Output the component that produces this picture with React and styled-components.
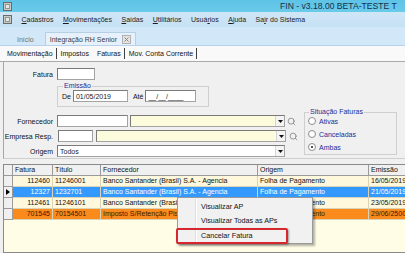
import styled, { createGlobalStyle } from "styled-components";
import { Search } from "lucide-react";

const GlobalStyle = createGlobalStyle`
  html, body {
    margin: 0;
    padding: 0;
    background: #f0f0f0;
    overflow: hidden;
  }
  body {
    font-family: "Liberation Sans", Arial, sans-serif;
  }
`;

const Window = styled.div`
  position: relative;
  width: 405px;
  height: 253px;
  overflow: hidden;
  background: #f0f0f0;
  display: flex;
  flex-direction: column;
  font-size: 7px;
  color: #000;
`;

const TitleBar = styled.div`
  height: 12px;
  flex: none;
  display: flex;
  align-items: center;
  padding-left: 3px;
  background: linear-gradient(#5ec3e6, #6acaea);
  white-space: nowrap;
`;

const Title = styled.span`
  margin-left: 268px;
  font-size: 8.6px;
  color: #14304a;
`;

const MenuBar = styled.div`
  height: 15px;
  flex: none;
  display: flex;
  align-items: center;
  padding-left: 3px;
  gap: 9.5px;
  background: linear-gradient(#cfe6f6, #c6e1f4);
  white-space: nowrap;
`;

const MenuItem = styled.span`
  color: #1b1b1b;
  u {
    text-decoration: underline;
  }
`;

const MdiTabs = styled.div`
  height: 18px;
  flex: none;
  display: flex;
  align-items: flex-end;
  padding-left: 12px;
  gap: 6px;
  background: #d2e8f8;
  border-bottom: 1px solid #b7d2ea;
`;

const MdiTab = styled.div`
  height: 12px;
  display: flex;
  align-items: center;
  gap: 3px;
  padding: 0 4px;
  color: ${(p) => (p.$active ? "#3d3d3d" : "#707070")};
  background: ${(p) => (p.$active ? "#e6f1fb" : "transparent")};
  border: 1px solid ${(p) => (p.$active ? "#b5cfe6" : "transparent")};
  border-bottom: none;
`;

const CloseBox = styled.span`
  width: 7px;
  height: 7px;
  border: 1px solid #b0b0b0;
  background: #e4e4e4;
  display: flex;
  align-items: center;
  justify-content: center;
  margin-left: 2px;
`;

const PageTabs = styled.div`
  height: 15px;
  flex: none;
  display: flex;
  align-items: center;
  padding-left: 3px;
  background: #f9f9f9;
  border-bottom: 1px solid #a9a9a9;
`;

const PageTab = styled.div`
  height: 11px;
  display: flex;
  align-items: center;
  padding: 0 3px 0 4px;
  border-right: 1px solid ${(p) => (p.$sep ? "#404040" : "transparent")};
  color: #111;
`;

const FormPanel = styled.div`
  flex: none;
  height: 97px;
  margin-left: 3px;
  padding-top: 6px;
  box-sizing: border-box;
  border-left: 1px solid #a6a6a6;
  border-bottom: 1px solid #cfcfcf;
  display: flex;
  flex-direction: column;
`;

const FieldRow = styled.div`
  display: flex;
  align-items: center;
  height: 12px;
  gap: ${(p) => p.$gap ?? 2}px;
`;

const Label = styled.span`
  width: 49px;
  margin-right: 2px;
  text-align: right;
  white-space: nowrap;
  color: #111;
`;

const Input = styled.div`
  width: ${(p) => p.$w}px;
  height: 12px;
  box-sizing: border-box;
  border: 1px solid #a3a3a3;
  border-top-color: #7a7a7a;
  border-left-color: #7a7a7a;
  background: ${(p) => (p.$yellow ? "#fcfbdc" : "#fff")};
  display: flex;
  align-items: center;
  padding-left: 2px;
  white-space: nowrap;
  color: #222;
`;

const DropButton = styled.span`
  margin-left: auto;
  width: 8px;
  height: 10px;
  display: flex;
  align-items: center;
  justify-content: center;
  background: #f4f4f4;
  border-left: 1px solid #d4d4d4;
`;

const GroupBox = styled.fieldset`
  margin: ${(p) => p.$margin || 0};
  width: ${(p) => p.$w}px;
  height: ${(p) => p.$h}px;
  box-sizing: border-box;
  padding: 0 0 0 ${(p) => p.$pad ?? 4}px;
  border: 1px solid #cfcfcf;
  display: flex;
  flex-direction: ${(p) => p.$dir || "row"};
  align-items: ${(p) => (p.$dir === "column" ? "stretch" : "center")};
  gap: ${(p) => p.$gap ?? 0}px;
`;

const Legend = styled.legend`
  padding: 0 1px;
  margin-left: 1px;
  font-size: 7px;
  color: #1d2c96;
  line-height: 8px;
`;

const Small = styled.span`
  color: #111;
  white-space: nowrap;
  margin-left: ${(p) => p.$ml ?? 0}px;
`;

const Lower = styled.div`
  display: flex;
  align-items: flex-start;
  gap: 5px;
  margin-top: 5px;
`;

const FieldColumn = styled.div`
  display: flex;
  flex-direction: column;
  gap: 3px;
  padding-top: 3px;
`;

const Magnifier = styled.span`
  display: flex;
  width: 10px;
  color: #7b7b7b;
`;

const RadioRow = styled.label`
  display: flex;
  align-items: center;
  gap: 3px;
  height: 10px;
  color: #1d2c96;
`;

const RadioDot = styled.span`
  width: 6px;
  height: 6px;
  border-radius: 50%;
  border: 1px solid #8d8d8d;
  background: #fff;
  display: flex;
  align-items: center;
  justify-content: center;
  &::after {
    content: "";
    width: 2px;
    height: 2px;
    border-radius: 50%;
    background: ${(p) => (p.$on ? "#1a1a1a" : "transparent")};
  }
`;

const Grid = styled.div`
  flex: 1;
  margin: 5px 0 0 3px;
  border: 1px solid #8a8a8a;
  border-right: none;
  background: #fffde6;
  overflow: hidden;
`;

const GridRow = styled.div`
  display: grid;
  grid-template-columns: 9px 40px 48px 157px 111px 70px;
  height: 11px;
  background: ${(p) =>
    p.$kind === "sel" ? "#3399ff" : p.$kind === "orange" ? "#fa8a1c" : p.$kind === "head" ? "#f0f0f0" : "#fff8dc"};
  color: ${(p) => (p.$kind === "sel" ? "#fff" : p.$kind === "orange" ? "#3a1a00" : "#111")};
`;

const Cell = styled.div`
  box-sizing: border-box;
  border-right: 1px solid ${(p) => (p.$head ? "#9a9a9a" : "#d9d4b8")};
  border-bottom: 1px solid ${(p) => (p.$head ? "#9a9a9a" : "#d9d4b8")};
  padding: 0 2px;
  line-height: 10px;
  white-space: nowrap;
  overflow: hidden;
  text-align: ${(p) => (p.$right ? "right" : "left")};
`;

const Indicator = styled.div`
  box-sizing: border-box;
  background: #f0f0f0;
  border-right: 1px solid #9a9a9a;
  border-bottom: 1px solid #9a9a9a;
  display: flex;
  align-items: center;
  justify-content: center;
`;

const ContextMenu = styled.div`
  position: absolute;
  left: 177px;
  top: 197px;
  width: 136px;
  height: 47px;
  box-sizing: border-box;
  background: #f1f1f1;
  border: 1px solid #9a9a9a;
  box-shadow: 2px 2px 2px rgba(0, 0, 0, 0.3);
  padding-top: 1px;
  display: flex;
  flex-direction: column;
  &::before {
    content: "";
    position: absolute;
    left: 17px;
    top: 1px;
    bottom: 1px;
    border-left: 1px solid #e0e0e0;
    border-right: 1px solid #fff;
  }
`;

const MenuEntry = styled.div`
  position: relative;
  height: 14.5px;
  display: flex;
  align-items: center;
  padding-left: 23px;
  font-size: 7.2px;
  color: #111;
`;

const Highlight = styled.span`
  position: absolute;
  left: -2px;
  top: 0;
  width: 112px;
  height: 16px;
  box-sizing: border-box;
  border: 2px solid #d6262e;
  border-radius: 2px;
  box-shadow: 1px 1px 2px rgba(0, 0, 0, 0.35);
`;

const AppIcon = () => (
  <svg width="9" height="9" viewBox="0 0 9 9">
    <rect x="0.5" y="0.5" width="8" height="8" fill="#c9c9c9" stroke="#6b6b6b" />
    <rect x="2" y="2" width="5" height="5" fill="#8e9e8e" />
    <rect x="3" y="3" width="3" height="3" fill="#e8e8e8" />
  </svg>
);

const Arrow = () => (
  <svg width="5" height="3" viewBox="0 0 5 3">
    <path d="M0 0h5L2.5 3z" fill="#111" />
  </svg>
);

const rows = [
  { kind: "norm", fatura: "112460", titulo: "11246001", forn: "Banco Santander (Brasil) S.A. - Agencia", orig: "Folha de Pagamento", em: "16/05/2019" },
  { kind: "sel", fatura: "12327", titulo: "1232701", forn: "Banco Santander (Brasil) S.A. - Agencia", orig: "Folha de Pagamento", em: "21/05/2019" },
  { kind: "norm", fatura: "112461", titulo: "11246101", forn: "Banco Santander (Brasil] S.A. - Agencia", orig: "Folha de Pagamento", em: "23/05/2019" },
  { kind: "orange", fatura: "701545", titulo: "70154501", forn: "Imposto S/Retenção Pis/Cofins/CSLL", orig: "Folha de Pagamento", em: "29/06/2500" },
];

export default function App() {
  return (
    <Window>
      <GlobalStyle />
      <TitleBar>
        <AppIcon />
        <Title>FIN - v3.18.00 BETA-TESTE T</Title>
      </TitleBar>

      <MenuBar>
        <AppIcon />
        <MenuItem><u>C</u>adastros</MenuItem>
        <MenuItem><u>M</u>ovimentações</MenuItem>
        <MenuItem><u>S</u>aídas</MenuItem>
        <MenuItem><u>U</u>tilitários</MenuItem>
        <MenuItem>Usuá<u>r</u>ios</MenuItem>
        <MenuItem><u>A</u>juda</MenuItem>
        <MenuItem>Sa<u>i</u>r do Sistema</MenuItem>
      </MenuBar>

      <MdiTabs>
        <MdiTab>Início</MdiTab>
        <MdiTab $active>
          Integração RH Senior
          <CloseBox>
            <svg width="5" height="5" viewBox="0 0 5 5">
              <path d="M0.5 0.5l4 4M4.5 0.5l-4 4" stroke="#888" strokeWidth="1" />
            </svg>
          </CloseBox>
        </MdiTab>
      </MdiTabs>

      <PageTabs>
        <PageTab $sep>Movimentação</PageTab>
        <PageTab>Impostos</PageTab>
        <PageTab $sep>Faturas</PageTab>
        <PageTab $sep>Mov. Conta Corrente</PageTab>
      </PageTabs>

      <FormPanel>
        <FieldRow>
          <Label>Fatura</Label>
          <Input $w={38} />
        </FieldRow>

        <GroupBox $margin="2px 0 0 53px" $w={152} $h={25} $pad={4} $gap={2}>
          <Legend>Emissão</Legend>
          <Small>De</Small>
          <Input $w={55}>01/05/2019</Input>
          <Small $ml={3}>Até</Small>
          <Input $w={51}>__/__/____</Input>
        </GroupBox>

        <Lower>
          <FieldColumn>
            <FieldRow>
              <Label>Fornecedor</Label>
              <Input $w={71} />
              <Input $w={155} $yellow>
                <DropButton><Arrow /></DropButton>
              </Input>
              <Magnifier><Search size={9} strokeWidth={2} /></Magnifier>
            </FieldRow>
            <FieldRow $gap={3}>
              <Label>Empresa Resp.</Label>
              <Input $w={35} />
              <Input $w={190} $yellow>
                <DropButton><Arrow /></DropButton>
              </Input>
              <Magnifier><Search size={9} strokeWidth={2} /></Magnifier>
            </FieldRow>
            <FieldRow>
              <Label>Origem</Label>
              <Input $w={228}>
                Todos
                <DropButton><Arrow /></DropButton>
              </Input>
            </FieldRow>
          </FieldColumn>

          <GroupBox $w={93} $h={47} $pad={3} $dir="column" $gap={3} $margin="-4px 0 0 0">
            <Legend>Situação Faturas</Legend>
            <RadioRow><RadioDot />Ativas</RadioRow>
            <RadioRow><RadioDot />Canceladas</RadioRow>
            <RadioRow><RadioDot $on />Ambas</RadioRow>
          </GroupBox>
        </Lower>
      </FormPanel>

      <Grid>
        <GridRow $kind="head">
          <Indicator />
          <Cell $head>Fatura</Cell>
          <Cell $head>Título</Cell>
          <Cell $head>Fornecedor</Cell>
          <Cell $head>Origem</Cell>
          <Cell $head>Emissão</Cell>
        </GridRow>
        {rows.map((r) => (
          <GridRow key={r.fatura} $kind={r.kind}>
            <Indicator>
              {r.kind === "sel" && (
                <svg width="4" height="6" viewBox="0 0 4 6">
                  <path d="M0 0l4 3-4 3z" fill="#000" />
                </svg>
              )}
            </Indicator>
            <Cell $right>{r.fatura}</Cell>
            <Cell>{r.titulo}</Cell>
            <Cell>{r.forn}</Cell>
            <Cell>{r.orig}</Cell>
            <Cell>{r.em}</Cell>
          </GridRow>
        ))}
      </Grid>

      <ContextMenu>
        <MenuEntry>Visualizar AP</MenuEntry>
        <MenuEntry>Visualizar Todas as APs</MenuEntry>
        <MenuEntry>
          Cancelar Fatura
          <Highlight />
        </MenuEntry>
      </ContextMenu>
    </Window>
  );
}
